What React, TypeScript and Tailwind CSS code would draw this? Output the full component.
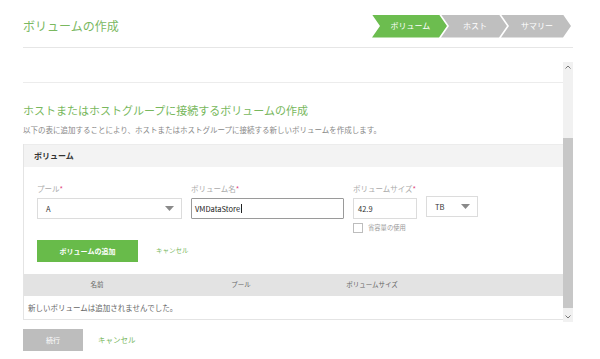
import React from "react";

const font = { fontFamily: '"Noto Sans CJK JP", "Noto Sans", sans-serif' };

function Caret() {
  return (
    <svg width="9" height="5" viewBox="0 0 9 5" className="shrink-0">
      <path d="M0 0 L9 0 L4.5 5 Z" fill="#8a8a8a" />
    </svg>
  );
}

function Steps() {
  return (
    <div className="flex h-[23px] items-stretch">
      <div className="flex w-[75px] items-center justify-center bg-[#6cbd4f] pl-[2px] text-[8px] text-white [clip-path:polygon(0_0,calc(100%-8px)_0,100%_50%,calc(100%-8px)_100%,0_100%,8px_50%)]">
        ボリューム
      </div>
      <div className="-ml-[6px] flex w-[66px] items-center justify-center bg-[#bfbfbf] pl-[2px] text-[8px] text-white [clip-path:polygon(0_0,calc(100%-8px)_0,100%_50%,calc(100%-8px)_100%,0_100%,8px_50%)]">
        ホスト
      </div>
      <div className="-ml-[6px] flex w-[70px] items-center justify-center bg-[#bfbfbf] pl-[2px] text-[8px] text-white [clip-path:polygon(0_0,calc(100%-8px)_0,100%_50%,calc(100%-8px)_100%,0_100%,8px_50%)]">
        サマリー
      </div>
    </div>
  );
}

export default function App() {
  return (
    <div className="h-[359px] w-[600px] overflow-hidden bg-white" style={font}>
      <div className="mx-[23px] w-[550px]">
        {/* Header */}
        <div className="flex h-[48px] items-center justify-between border-b border-[#e6e6e6] pb-[1px]">
          <div className="mt-[6px] text-[12px] leading-none text-[#7ab85f]">ボリュームの作成</div>
          <div className="mr-[2px] mt-[6px]">
            <Steps />
          </div>
        </div>

        {/* Scroll area */}
        <div className="mt-[14px] flex h-[260px]">
          <div className="flex-1 overflow-hidden">
            <div className="h-[21px] border-b border-[#ececec]" />
            <div className="mt-[19px] text-[11px] leading-[16px] text-[#78b85d]">
              ホストまたはホストグループに接続するボリュームの作成
            </div>
            <div className="mt-[7px] text-[7.5px] leading-[10px] text-[#888]">
              以下の表に追加することにより、ホストまたはホストグループに接続する新しいボリュームを作成します。
            </div>

            {/* Panel */}
            <div className="mt-[9px] border-b border-l border-[#e4e4e4]">
              <div className="flex h-[23px] items-center border-t border-[#ececec] bg-[#f3f3f3] px-[10px] text-[8px] font-bold text-[#333]">
                ボリューム
              </div>
              <div className="px-[13px] pt-[17px]">
                <div className="flex items-start gap-[9px]">
                  <div className="w-[145px]">
                    <div className="h-[10px] text-[7.5px] leading-[10px] text-[#aaa]">
                      プール<span className="text-[#e0457b]">*</span>
                    </div>
                    <div className="mt-[4px] flex h-[21px] items-center justify-between border border-[#dcdcdc] pl-[8px] pr-[7px] text-[7.5px] text-[#333]">
                      <span>A</span>
                      <Caret />
                    </div>
                  </div>
                  <div className="w-[153px]">
                    <div className="h-[10px] text-[7.5px] leading-[10px] text-[#aaa]">
                      ボリューム名<span className="text-[#e0457b]">*</span>
                    </div>
                    <div className="mt-[4px] flex h-[21px] items-center rounded-[1px] border border-[#9a9a9a] pl-[3px] text-[7.5px] text-[#222]">
                      VMDataStore<span className="ml-[1px] h-[9px] w-px bg-[#222]" />
                    </div>
                  </div>
                  <div className="w-[64px]">
                    <div className="h-[10px] whitespace-nowrap text-[7.5px] leading-[10px] text-[#aaa]">
                      ボリュームサイズ<span className="text-[#e0457b]">*</span>
                    </div>
                    <div className="mt-[4px] flex h-[21px] items-center border border-[#dcdcdc] pl-[4px] text-[7.5px] text-[#333]">
                      42.9
                    </div>
                    <div className="mt-[4px] flex items-center gap-[5px] whitespace-nowrap">
                      <span className="h-[10px] w-[10px] border border-[#bdbdbd] bg-white" />
                      <span className="text-[6.3px] text-[#999]">省容量の使用</span>
                    </div>
                  </div>
                  <div className="w-[52px] pt-[12px]">
                    <div className="flex h-[21px] items-center justify-between border border-[#dcdcdc] pl-[8px] pr-[7px] text-[7.5px] text-[#333]">
                      <span>TB</span>
                      <Caret />
                    </div>
                  </div>
                </div>

                <div className="mt-[7px] flex items-center">
                  <div className="flex h-[22px] w-[101px] items-center justify-center bg-[#68bb4a] text-[7px] font-bold text-white">
                    ボリュームの追加
                  </div>
                  <div className="ml-[18px] text-[6.5px] text-[#7ab85f]">キャンセル</div>
                </div>
              </div>

              <div className="mt-[12px] flex h-[22px] items-center bg-[#e3e3e3] text-[6.5px] text-[#666]">
                <div className="w-[146px] text-center">名前</div>
                <div className="w-[142px] text-center">プール</div>
                <div className="w-[120px] text-center">ボリュームサイズ</div>
              </div>
              <div className="flex h-[23px] items-center px-[4px] text-[7.5px] text-[#666]">
                新しいボリュームは追加されませんでした。
              </div>
            </div>
          </div>

          {/* Scrollbar */}
          <div className="flex w-[10px] flex-col bg-[#f1f1f1]">
            <div className="flex h-[10px] items-center justify-center">
              <svg width="6" height="4" viewBox="0 0 6 4">
                <path d="M0.5 3.5 L3 1 L5.5 3.5" fill="none" stroke="#777" strokeWidth="1" />
              </svg>
            </div>
            <div className="mt-[66px] h-[170px] bg-[#c7c7c7]" />
            <div className="mt-auto flex h-[10px] items-center justify-center">
              <svg width="6" height="4" viewBox="0 0 6 4">
                <path d="M0.5 0.5 L3 3 L5.5 0.5" fill="none" stroke="#777" strokeWidth="1" />
              </svg>
            </div>
          </div>
        </div>

        {/* Footer */}
        <div className="mt-[7px] flex items-center">
          <div className="flex h-[22px] w-[60px] items-center justify-center bg-[#bdbdbd] text-[7px] text-white">
            続行
          </div>
          <div className="ml-[15px] text-[7.5px] text-[#7ab85f]">キャンセル</div>
        </div>
      </div>
    </div>
  );
}
